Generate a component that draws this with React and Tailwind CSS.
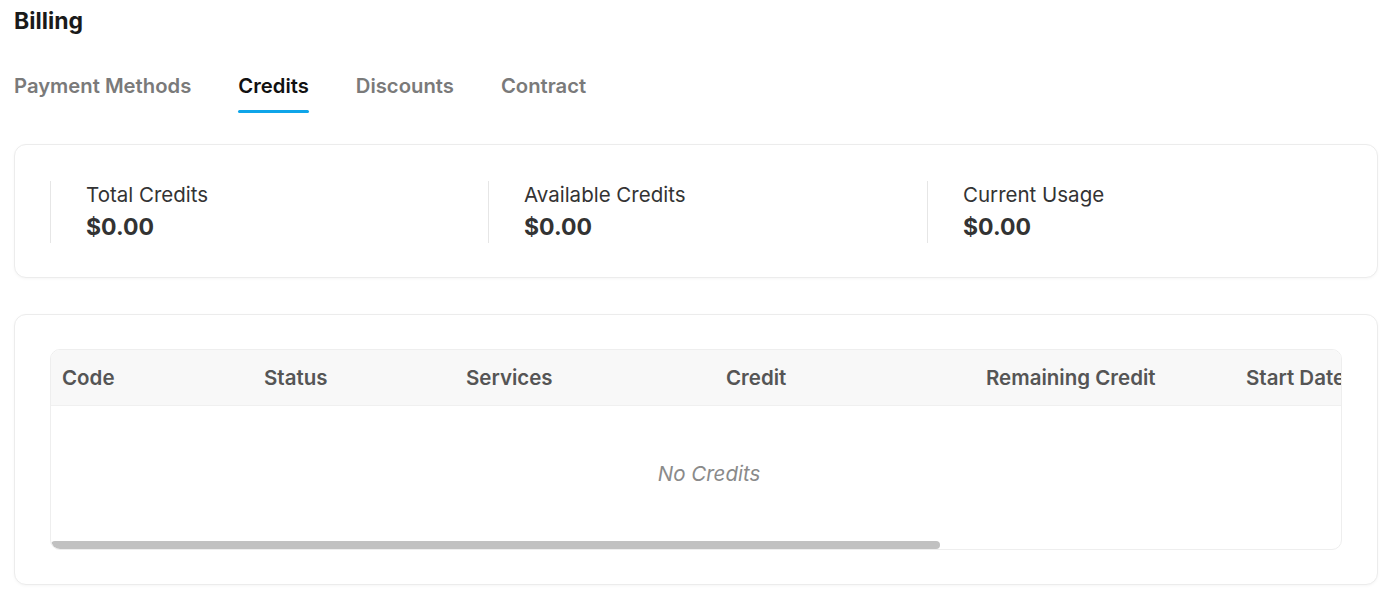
import { useState } from "react";

const tabs = ["Payment Methods", "Credits", "Discounts", "Contract"];

const stats = [
    { label: "Total Credits", value: "$0.00" },
    { label: "Available Credits", value: "$0.00" },
    { label: "Current Usage", value: "$0.00" },
];

const columns = [
    { label: "Code", w: "w-[202px]" },
    { label: "Status", w: "w-[202px]" },
    { label: "Services", w: "w-[260px]" },
    { label: "Credit", w: "w-[260px]" },
    { label: "Remaining Credit", w: "w-[260px]" },
    { label: "Start Date", w: "w-[260px]" },
    { label: "End Date", w: "w-[260px]" },
];

export default function App() {
    const [active, setActive] = useState("Credits");

    return (
        <div className="min-h-screen bg-white pl-[14px] pr-[22px] pt-[7px] font-['Inter','Liberation_Sans',sans-serif] text-[#222]">
            {/* Header */}
            <h1 className="text-[23px] font-bold leading-[28px] text-[#1a1a1a]">Billing</h1>

            {/* Tabs */}
            <div className="mt-[38px] flex gap-[47px]">
                {tabs.map((t) => (
                    <button
                        key={t}
                        onClick={() => setActive(t)}
                        className={`relative pb-[14px] text-[20.25px] font-semibold leading-[26px] ${
                            active === t ? "text-[#111]" : "text-[#7a7a7a]"
                        }`}
                    >
                        {t}
                        {active === t && (
                            <span className="absolute bottom-0 left-0 h-[3px] w-full rounded-full bg-[#0ea5e9]"></span>
                        )}
                    </button>
                ))}
            </div>

            {/* Summary card */}
            <div className="mt-[31px] rounded-[12px] border border-[#ececec] bg-white px-[35px] pt-[36px] pb-[34px] shadow-[0_1px_3px_rgba(0,0,0,0.04)]">
                <div className="grid grid-cols-[438px_439px_1fr]">
                    {stats.map((s) => (
                        <div key={s.label} className="border-l border-[#e6e6e6] pl-[35px]">
                            <div className="text-[20.5px] leading-[28px] text-[#333]">{s.label}</div>
                            <div className="mt-[2px] text-[23px] font-bold leading-[32px] text-[#333]">{s.value}</div>
                        </div>
                    ))}
                </div>
            </div>

            {/* Credits table */}
            <div className="mt-[36px] rounded-[12px] border border-[#ececec] bg-white px-[35px] py-[34px] shadow-[0_1px_3px_rgba(0,0,0,0.04)]">
                <div className="overflow-hidden rounded-[10px] border border-[#eeeeee]">
                    <div className="flex h-[56px] items-center overflow-hidden border-b border-[#f0f0f0] bg-[#f8f8f8] whitespace-nowrap">
                        {columns.map((c) => (
                            <div
                                key={c.label}
                                className={`${c.w} shrink-0 px-[11px] pt-[2px] text-[20.5px] font-semibold text-[#555]`}
                            >
                                {c.label}
                            </div>
                        ))}
                    </div>
                    <div className="flex h-[135px] items-center justify-center pl-[26px] pt-[2px] text-[20.5px] italic text-[#8a8a8a]">
                        No Credits
                    </div>
                    {/* horizontal scrollbar */}
                    <div className="h-[8px]">
                        <div className="h-full w-[889px] rounded-full bg-[#c1c1c1]"></div>
                    </div>
                </div>
            </div>
        </div>
    );
}
